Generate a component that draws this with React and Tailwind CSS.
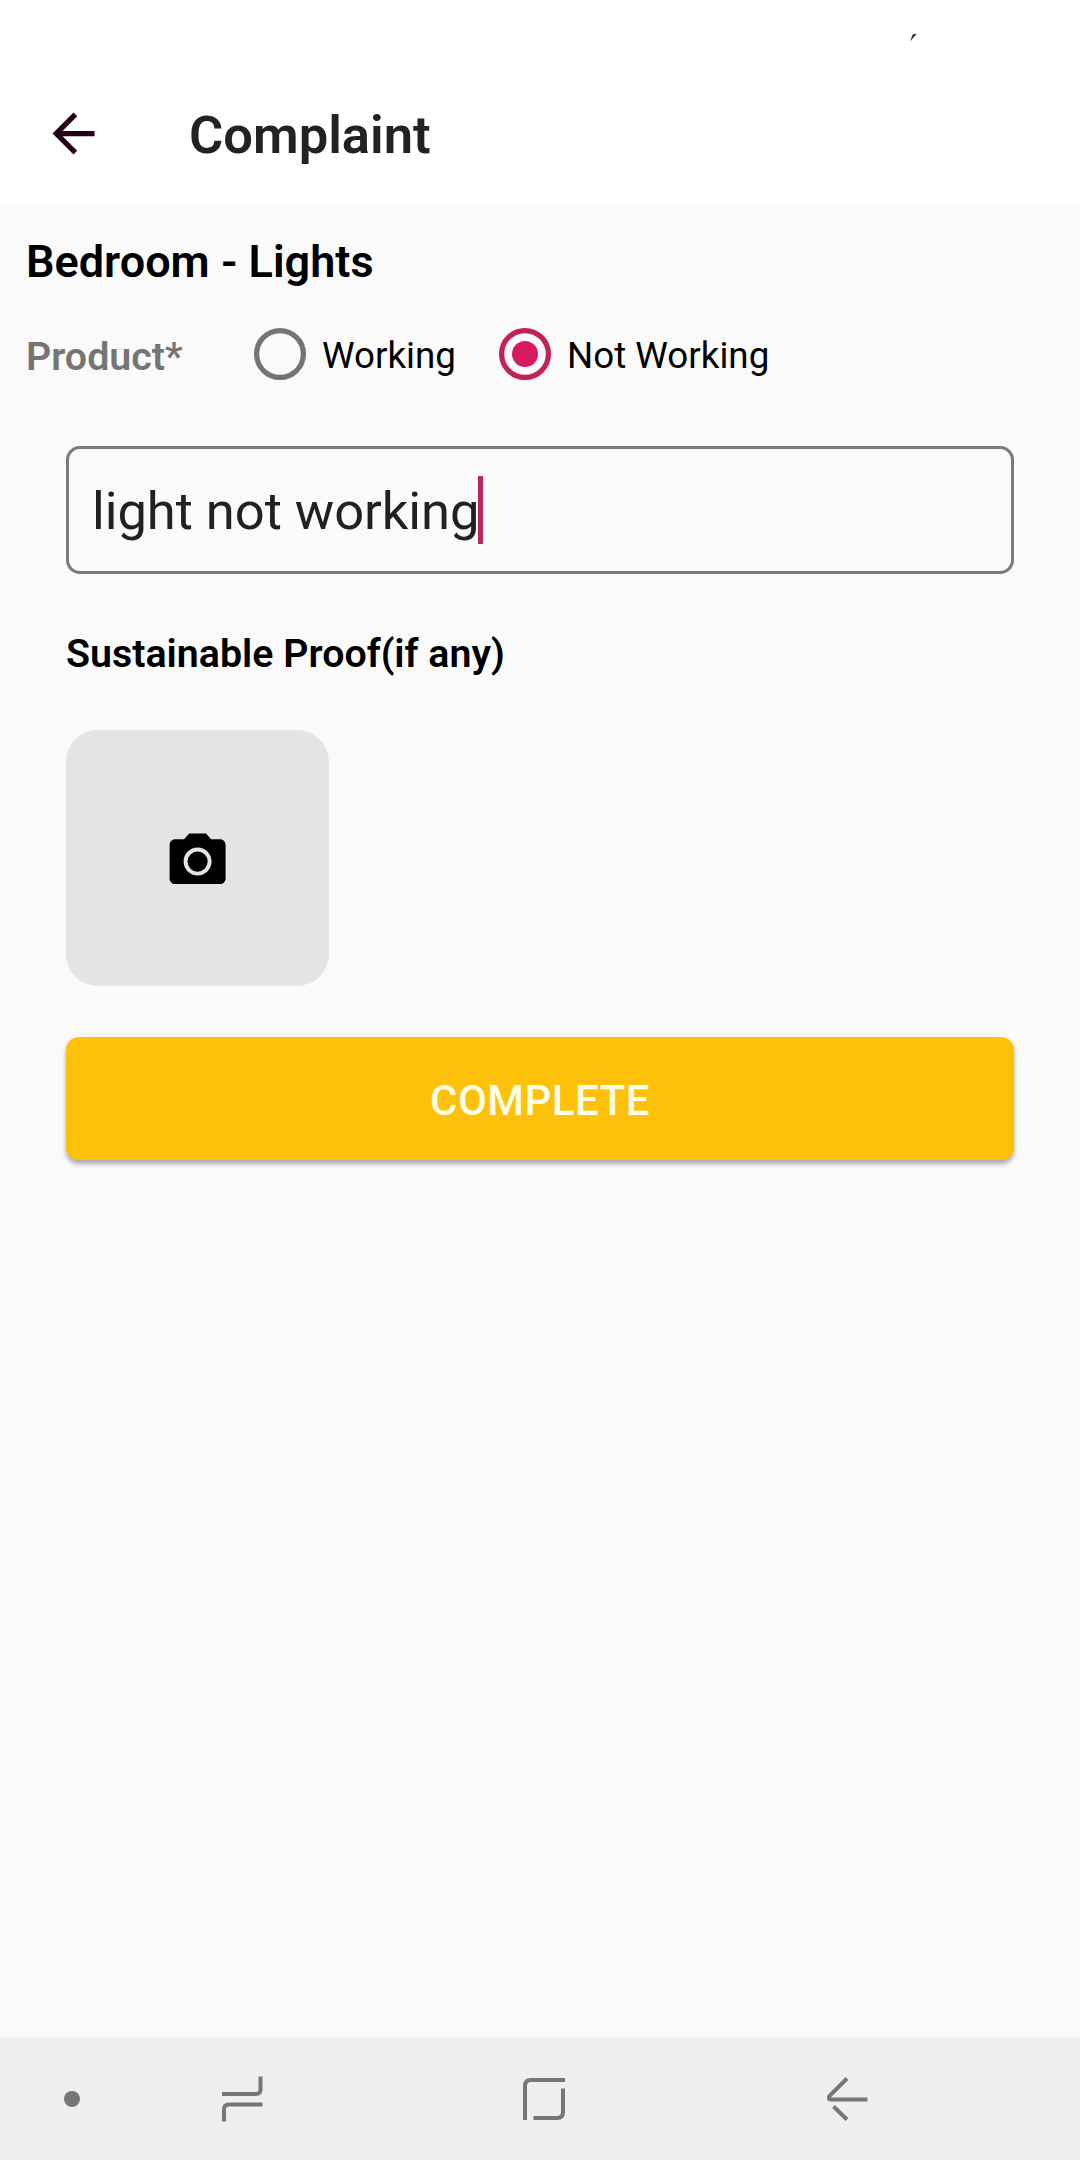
function Radio({ label, checked }) {
  return (
    <div className="flex items-center">
      <svg className="size-[52px] shrink-0" viewBox="0 0 52 52" fill="none">
        <circle cx="26" cy="26" r="23.4" stroke={checked ? "#c2215c" : "#747474"} strokeWidth="5.2" />
        {checked && <circle cx="26" cy="26" r="13" fill="#d81b60" />}
      </svg>
      <span className="ml-[16px] mt-[3px] text-[36.75px] leading-[50px] text-black">{label}</span>
    </div>
  );
}

function Header() {
  return (
    <header className="h-[204px] shrink-0 bg-white">
      <div className="flex h-[63px] pl-[910px] pt-[34px]">
        <svg className="h-[8px] w-[8px]" viewBox="0 0 8 8">
          <path d="M0 7.5 2.6 0.8Q3 0 4 0H6.6Z" fill="#333" />
        </svg>
      </div>
      <div className="flex h-[141px] items-center pl-[42px]">
        <svg className="mt-[-1px] size-[63px]" viewBox="0 0 24 24" fill="#210018">
          <path d="M20 11H7.83l5.59-5.59L12 4l-8 8 8 8 1.41-1.41L7.83 13H20z" />
        </svg>
        <h1 className="ml-[84px] mt-[3px] text-[52.5px] font-semibold leading-[62px] text-[#222]">Complaint</h1>
      </div>
    </header>
  );
}

function NavBar() {
  return (
    <nav className="flex h-[123px] shrink-0 items-center bg-[#efefef] pl-[64px]">
      <div className="size-[16px] rounded-full bg-[#777]" />
      <svg className="ml-[142px] h-[46px] w-[42px]" viewBox="0 0 42 46" fill="none" stroke="#777" strokeWidth="4">
        <path d="M0 18H34Q38.500 18 38.500 13.500V0.500M40.500 28.500H7Q2 28.500 2 33.500V45.500" />
      </svg>
      <svg className="ml-[259px] size-[42px]" viewBox="0 0 42 42" fill="none" stroke="#777" strokeWidth="4">
        <path d="M2 42V8Q2 2 8 2H42M40 10.500V34Q40 40 34 40H10.500" />
      </svg>
      <svg className="ml-[262px] h-[44px] w-[42px]" viewBox="0 0 42 44" fill="none" stroke="#777" strokeWidth="4">
        <path d="M20 1.500 2.800 18.700C.8 20.800 1.500 22.500 4 22.500H40.500M6.500 29.500 20 42.500" />
      </svg>
    </nav>
  );
}

export default function App() {
  return (
    <div className="flex h-[2160px] w-[1080px] flex-col overflow-hidden bg-[#fafafa] font-[Roboto,sans-serif]">
      <Header />
      <main className="flex-1">
        <h2 className="pl-[26px] pt-[31px] text-[45px] font-semibold leading-[54px] text-black">Bedroom - Lights</h2>
        <div className="mt-[39px] flex h-[52px] items-center">
          <span className="mt-[5px] w-[228px] pl-[26px] text-[39.375px] font-semibold leading-[48px] text-[#757575]">
            Product*
          </span>
          <div className="ml-[26px] w-[245px]">
            <Radio label="Working" />
          </div>
          <Radio label="Not Working" checked />
        </div>
        <div className="px-[66px] pt-[66px]">
          <div className="flex h-[128px] items-center rounded-[14px] border-3 border-[#7a7a7a] pl-[23px]">
            <span className="mt-[2px] whitespace-nowrap text-[52.5px] leading-[62px] tracking-[-0.05px] text-[#212121]">light not working</span>
            <span className="-ml-[1px] h-[68px] w-[5px] bg-[#b92762]" />
          </div>
          <h3 className="mt-[56px] text-[39.375px] font-semibold leading-[48px] text-black">Sustainable Proof(if any)</h3>
          <div className="mt-[52px] flex h-[256px] w-[263px] items-center justify-center rounded-[32px] bg-[#e4e4e4]">
            <svg className="ml-[1px] mt-[7px] size-[67.200px]" viewBox="0 0 24 24" fill="#000">
              <circle cx="12" cy="12" r="3.600" />
              <path d="M9 2 7.170 4H4c-1.100 0-2 .9-2 2v12c0 1.100.9 2 2 2h16c1.100 0 2-.9 2-2V6c0-1.100-.9-2-2-2h-3.170L15 2H9zm3 15c-2.760 0-5-2.240-5-5s2.240-5 5-5 5 2.240 5 5-2.240 5-5 5z" />
            </svg>
          </div>
          <button className="mt-[51px] flex h-[123px] w-full items-center justify-center rounded-[13px] bg-[#fec109] pt-[3px] text-[42px] font-medium tracking-[0.5px] text-[#fffde6] shadow-[0_4px_5px_rgba(0,0,0,0.32)]">
            COMPLETE
          </button>
        </div>
      </main>
      <NavBar />
    </div>
  );
}
